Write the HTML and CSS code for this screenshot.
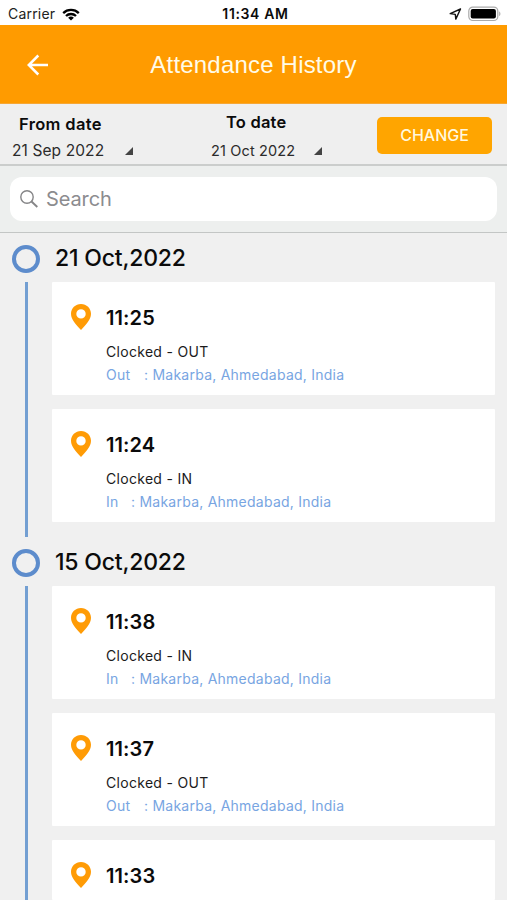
FILE: index.html
```html
<!DOCTYPE html>
<html lang="en">
<head>
<meta charset="utf-8">
<title>Attendance History</title>
<link rel="stylesheet" href="styles.css">
</head>
<body>
<svg width="0" height="0" class="defs" aria-hidden="true">
  <symbol id="pin" viewBox="0 0 20 26"><path fill="#ff9b05" fill-rule="evenodd" d="M10 0C4.400 0 0 4.300 0 9.800 0 15.800 5 20.500 10 26c5-5.500 10-10.200 10-16.200C20 4.300 15.600 0 10 0Zm0 5.200a4.700 4.700 0 1 1 0 9.400 4.700 4.700 0 0 1 0-9.400Z"/></symbol>
</svg>
<div class="status">
  <div class="carrier"><span>Carrier</span>
    <svg width="18" height="13" viewBox="0 0 18 13"><g fill="none" stroke="#000" stroke-width="2.300"><path d="M1.200 5.100a11.200 11.200 0 0 1 15.600 0"/><path d="M4 8a7.200 7.200 0 0 1 10 0"/></g><path d="M9 12.500 6.100 9.800a4.300 4.300 0 0 1 5.800 0Z"/></svg>
  </div>
  <div class="clock">11:34 AM</div>
  <div class="indicators">
    <svg width="13" height="12" viewBox="0 0 13 12"><path d="M11.500 1 1.200 5.600l5.100.8.500 4.700Z" fill="none" stroke="#111" stroke-width="1.400" stroke-linejoin="round"/></svg>
    <svg width="33" height="16" viewBox="0 0 33 16"><rect x=".8" y="1.100" width="29" height="13.400" rx="4" fill="#fff" stroke="#aaa" stroke-width="1.200"/><rect x="2.700" y="3" width="25.200" height="9.600" rx="2"/><path d="M31.200 5.500c1.600.6 1.600 4 0 4.600Z" fill="#aaa"/></svg>
  </div>
</div>
<header class="appbar">
  <svg class="back" width="22" height="22" viewBox="0 0 22 22"><path d="M21 11H2M11.300 1.500 1.800 11l9.500 9.500" fill="none" stroke="#fff" stroke-width="2.500"/></svg>
  <h1>Attendance History</h1>
</header>
<section class="filters">
  <div class="field from"><b>From date</b><div class="value"><span>21 Sep 2022</span><i class="corner"></i></div></div>
  <div class="field to"><b>To date</b><div class="value"><span>21 Oct 2022</span><i class="corner"></i></div></div>
  <button class="change">CHANGE</button>
</section>
<section class="search">
  <div class="searchbox">
    <svg width="18" height="18" viewBox="0 0 18 18"><g fill="none" stroke="#858587" stroke-width="1.400"><circle cx="7" cy="7" r="6.200"/><path d="m11.500 11.500 5.800 5.500" stroke-width="1.900"/></g></svg>
    <span>Search</span>
  </div>
</section>
<main>
  <section class="day">
    <div class="dayhead"><i class="ring"></i><h2>21 Oct,2022</h2></div>
    <div class="entries">
      <article class="card"><svg class="pin"><use href="#pin"/></svg><div class="info"><h3>11:25</h3><p>Clocked - OUT</p><p class="place"><span class="dir">Out</span>: Makarba, Ahmedabad, India</p></div></article>
      <article class="card"><svg class="pin"><use href="#pin"/></svg><div class="info"><h3>11:24</h3><p>Clocked - IN</p><p class="place"><span class="dir in">In</span>: Makarba, Ahmedabad, India</p></div></article>
    </div>
  </section>
  <section class="day">
    <div class="dayhead"><i class="ring"></i><h2>15 Oct,2022</h2></div>
    <div class="entries">
      <article class="card"><svg class="pin"><use href="#pin"/></svg><div class="info"><h3>11:38</h3><p>Clocked - IN</p><p class="place"><span class="dir in">In</span>: Makarba, Ahmedabad, India</p></div></article>
      <article class="card"><svg class="pin"><use href="#pin"/></svg><div class="info"><h3>11:37</h3><p>Clocked - OUT</p><p class="place"><span class="dir">Out</span>: Makarba, Ahmedabad, India</p></div></article>
      <article class="card last"><svg class="pin"><use href="#pin"/></svg><div class="info"><h3>11:33</h3></div></article>
    </div>
  </section>
</main>
</body>
</html>
```
FILE: styles.css
```css
* { box-sizing: border-box; margin: 0; padding: 0; }
body { width: 507px; height: 900px; overflow: hidden; display: flex; flex-direction: column; background: #f0f0f0; color: #0b0b0b; font-family: Inter, "Liberation Sans", sans-serif; }
body > * { flex-shrink: 0; }
svg { display: block; }
.defs { display: none; }
.status { height: 25px; background: #fff; display: grid; grid-template-columns: 1fr auto 1fr; align-items: center; padding: 3px 6px 0 8px; font-size: 14px; line-height: 20px; }
.carrier { display: flex; align-items: center; gap: 7px; color: #222; letter-spacing: .2px; }
.clock { font-weight: 600; font-size: 14px; letter-spacing: .65px; padding-left: 2px; }
.indicators { display: flex; justify-content: flex-end; align-items: center; gap: 6px; }
.appbar { height: 79px; background: #ff9b00; display: grid; grid-template-columns: 27px 1fr 27px; align-items: center; padding: 1px 27px 0; border-bottom: 1px solid #f6a735; }
.appbar h1 { font: 400 24px/30px "Liberation Sans", sans-serif; letter-spacing: .2px; color: #fffbe8; text-align: center; padding-top: 1px; }
.filters { height: 62px; background: #efefef; border-bottom: 2px solid #cbcdcc; display: flex; padding-left: 12px; padding-right: 15px; }
.field { display: flex; flex-direction: column; }
.field b { font-weight: 600; font-size: 16.500px; line-height: 20px; letter-spacing: .35px; }
.from { width: 199px; padding-top: 10px; }
.from b { padding-left: 7px; }
.from .value { padding-top: 7px; letter-spacing: .1px; }
.to { width: 166px; padding-top: 8px; }
.to b { padding-left: 15px; letter-spacing: .2px; }
.to .value { padding-top: 9px; font-size: 14.500px; letter-spacing: .15px; }
.value { display: flex; align-items: center; font-size: 15.500px; line-height: 20px; color: #2b2b2b; }
.from .value span { width: 113px; }
.to .value span { width: 103px; }
.corner { width: 8px; height: 8px; background: #444; clip-path: polygon(100% 0, 100% 100%, 0 100%); }
.change { width: 115px; height: 37px; margin-top: 13px; border: 0; border-radius: 5px; background: #ffa500; color: #fff8df; font: 500 16px/37px Inter, sans-serif; }
.search { height: 67px; background: #edefee; border-bottom: 1px solid #c3c6c5; padding: 11px 10px; }
.searchbox { height: 44px; border-radius: 12px; background: #fff; display: flex; align-items: center; gap: 8px; padding-left: 10px; color: #8c8c8f; font-size: 20px; letter-spacing: -.1px; }
.searchbox span { line-height: 24px; padding-bottom: 1px; }
main { flex: 1 1 0; min-height: 0; overflow: hidden; }
.dayhead { height: 49px; display: flex; align-items: center; gap: 15px; padding: 3px 0 0 12px; }
.ring { width: 28px; height: 28px; border: 4px solid #5d8ccc; border-radius: 50%; }
.dayhead h2 { font-weight: 500; font-size: 23px; line-height: 28px; letter-spacing: -.2px; padding-bottom: 2px; }
.entries { margin-left: 25px; margin-right: 12px; padding-left: 24px; border-left: 3px solid #739fd2; display: flex; flex-direction: column; }
.card { height: 113px; margin-bottom: 14.300px; background: #fff; display: flex; gap: 15px; padding: 21px 0 0 19px; border-radius: 1px; }
.card.last { height: 60px; margin-bottom: 0; padding-top: 21px; }
.pin { width: 20px; height: 26px; margin-top: 1px; }
.info h3 { font-weight: 600; font-size: 20px; line-height: 28px; letter-spacing: .1px; padding-top: 1px; }
.info p { font-size: 14px; line-height: 20px; letter-spacing: .3px; color: #1b1b1b; margin-top: 10px; }
.info p.place { display: flex; margin-top: 3px; color: #78a5e2; letter-spacing: .24px; }
.dir { width: 38px; }
.dir.in { width: 25px; }
```
